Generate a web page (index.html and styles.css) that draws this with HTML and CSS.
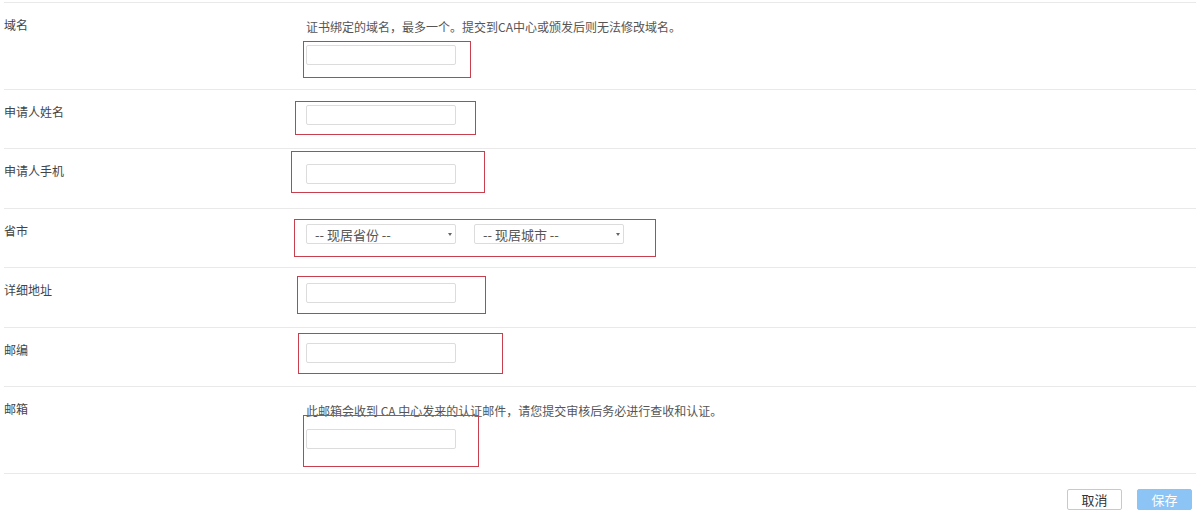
FILE: index.html
```html
<!DOCTYPE html>
<html lang="zh-CN">
<head>
    <meta charset="UTF-8">
    <meta name="viewport" content="width=device-width, initial-scale=1.0">
    <title>证书申请信息</title>
    <link rel="stylesheet" href="styles.css">
</head>
<body>
    <div class="form">
        <div class="row">
            <div class="label">域名</div>
            <div class="field">
                <p class="hint">证书绑定的域名，最多一个。提交到CA中心或颁发后则无法修改域名。</p>
                <div class="control">
                    <input type="text" class="input">
                    <span class="mark mark-1"></span>
                </div>
            </div>
        </div>
        <div class="row">
            <div class="label">申请人姓名</div>
            <div class="field">
                <div class="control">
                    <input type="text" class="input">
                    <span class="mark mark-2"></span>
                </div>
            </div>
        </div>
        <div class="row">
            <div class="label">申请人手机</div>
            <div class="field">
                <div class="control">
                    <input type="text" class="input">
                    <span class="mark mark-3"></span>
                </div>
            </div>
        </div>
        <div class="row">
            <div class="label">省市</div>
            <div class="field">
                <div class="control selects">
                    <span class="select-wrap">
                        <select class="select">
                            <option>-- 现居省份 --</option>
                        </select>
                    </span>
                    <span class="select-wrap">
                        <select class="select">
                            <option>-- 现居城市 --</option>
                        </select>
                    </span>
                    <span class="mark mark-4"></span>
                </div>
            </div>
        </div>
        <div class="row">
            <div class="label">详细地址</div>
            <div class="field">
                <div class="control">
                    <input type="text" class="input">
                    <span class="mark mark-5"></span>
                </div>
            </div>
        </div>
        <div class="row">
            <div class="label">邮编</div>
            <div class="field">
                <div class="control">
                    <input type="text" class="input">
                    <span class="mark mark-6"></span>
                </div>
            </div>
        </div>
        <div class="row row-last">
            <div class="label">邮箱</div>
            <div class="field">
                <p class="hint">此邮箱会收到 CA 中心发来的认证邮件，请您提交审核后务必进行查收和认证。</p>
                <div class="control">
                    <input type="text" class="input">
                    <span class="mark mark-7"></span>
                </div>
            </div>
        </div>
        <div class="actions">
            <button class="btn btn-cancel">取消</button>
            <button class="btn btn-save">保存</button>
        </div>
    </div>
</body>
</html>
```

FILE: styles.css
```css
* {
    box-sizing: border-box;
    margin: 0;
    padding: 0;
}

body {
    font-family: "Noto Sans CJK SC", "Noto Sans", sans-serif;
    font-size: 12px;
    color: #444;
    background: #fff;
}

.form {
    width: 1192px;
    margin-left: 4px;
    padding-top: 2px;
}

.row {
    display: flex;
    border-top: 1px solid #e9e9e9;
    padding-bottom: 23.5px;
}

.row-last {
    border-bottom: 1px solid #e9e9e9;
}

.label {
    width: 302px;
    flex-shrink: 0;
    padding-top: 13px;
    line-height: 18px;
    color: #444;
}

.field {
    padding-top: 15px;
}

.hint {
    line-height: 18px;
    color: #555;
    margin-bottom: 9px;
}

.control {
    position: relative;
    display: flex;
    height: 20px;
}

.input {
    width: 150px;
    height: 20px;
    border: 1px solid #dcdcdc;
    border-radius: 2px;
    outline: none;
    background: #fff;
}

.selects {
    gap: 18px;
}

.select-wrap {
    position: relative;
    display: block;
}

.select-wrap::after {
    content: '';
    position: absolute;
    right: 4px;
    top: 9px;
    border-left: 2px solid transparent;
    border-right: 2px solid transparent;
    border-top: 3px solid #666;
}

.select {
    appearance: none;
    -webkit-appearance: none;
    width: 150px;
    height: 20px;
    border: 1px solid #dcdcdc;
    border-radius: 2px;
    background: #fff;
    padding-left: 8px;
    font-family: inherit;
    font-size: 13px;
    color: #555;
    outline: none;
}

.mark {
    position: absolute;
    border: 1px solid #c8404e;
    pointer-events: none;
}

.mark-1 { left: -3px; top: -4px; width: 168px; height: 37px; }
.mark-2 { left: -11px; top: -4px; width: 181px; height: 34px; }
.mark-3 { left: -15px; top: -13px; width: 194px; height: 42px; }
.mark-4 { left: -12px; top: -5px; width: 362px; height: 38px; }
.mark-5 { left: -9px; top: -7px; width: 189px; height: 38px; }
.mark-6 { left: -8px; top: -10px; width: 205px; height: 41px; }
.mark-7 { left: -3px; top: -14px; width: 176px; height: 52px; }

.actions {
    display: flex;
    justify-content: flex-end;
    gap: 15px;
    padding: 15px 4px 0 0;
}

.btn {
    width: 55px;
    height: 21px;
    border-radius: 2px;
    font-family: inherit;
    font-size: 13px;
    line-height: 19px;
    cursor: pointer;
}

.btn-cancel {
    background: #fff;
    border: 1px solid #c9c9c9;
    color: #333;
}

.btn-save {
    background: #8cc4f6;
    border: 1px solid #8cc4f6;
    color: #fff;
}
```
